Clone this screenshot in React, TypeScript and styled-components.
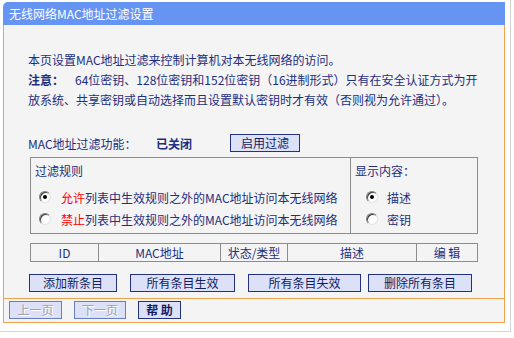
import React from "react";
import styled, { createGlobalStyle } from "styled-components";

const GlobalStyle = createGlobalStyle`
  body {
    margin: 0;
    background: #ffffff;
    font-family: "Noto Sans CJK SC", "DejaVu Sans", sans-serif;
    font-size: 12px;
    color: #1c2f80;
  }
`;

const Page = styled.div`
  width: 502px;
  padding: 2px 5px 8px 3px;
  border-right: 1px solid #d4d4d4;
  border-bottom: 1px solid #d4d4d4;
`;

const TitleBar = styled.div`
  height: 23px;
  line-height: 23px;
  padding-left: 6px;
  background: #6594f2;
  color: #ffffff;
  font-size: 12px;
  border-top-left-radius: 5px;
`;

const Body = styled.div`
  background: #f4f4f4;
  border-left: 1px solid #f0a24c;
  border-right: 1px solid #f0a24c;
  border-bottom: 1px solid #f0a24c;
`;

const Main = styled.div`
  padding: 25px 0 6px 24px;
`;

const Intro = styled.div`
  line-height: 20px;
  .note {
    font-weight: bold;
    margin-right: 11px;
  }
`;

const SwitchRow = styled.div`
  margin-top: 24px;
  height: 18px;
  display: flex;
  align-items: center;
  .label {
    width: 128px;
  }
  .state {
    width: 74px;
    font-weight: bold;
  }
`;

const Button = styled.button<{ $w: number; $bold?: boolean; $off?: boolean }>`
  width: ${(p) => p.$w}px;
  height: 18px;
  padding: 0;
  margin: 0;
  background: #dde1f8;
  border: 1px solid ${(p) => (p.$off ? "#6a7cc4" : "#223180")};
  color: ${(p) => (p.$off ? "#a2a2a8" : "#101c5e")};
  text-shadow: ${(p) => (p.$off ? "1px 1px 0 #ffffff" : "none")};
  font-family: "Noto Sans CJK SC", sans-serif;
  font-size: 12px;
  font-weight: ${(p) => (p.$bold ? "bold" : "normal")};
  line-height: 16px;
  cursor: pointer;
`;

const RulesBox = styled.div`
  margin: 5px 0 0 2px;
  width: 446px;
  display: grid;
  grid-template-columns: 320px 126px;
  border: 1px solid #8c8c8c;
`;

const RuleCell = styled.div<{ $divider?: boolean }>`
  padding: 3px 0 3px 4px;
  border-right: ${(p) => (p.$divider ? "1px solid #8c8c8c" : "none")};
  .title {
    line-height: 20px;
    margin-bottom: 5px;
  }
`;

const RadioRow = styled.label<{ $indent: number; $gap: number }>`
  height: 22px;
  display: flex;
  align-items: center;
  padding-left: ${(p) => p.$indent}px;
  gap: ${(p) => p.$gap}px;
  .hot {
    color: #ff0000;
  }
`;

const Radio = styled.span<{ $on?: boolean }>`
  width: 10px;
  height: 10px;
  border-radius: 50%;
  background: #ffffff;
  border: 1px solid;
  border-color: #7c7c7c #e4e4e4 #e4e4e4 #7c7c7c;
  box-shadow: inset 1px 1px 0 #3c3c3c;
  position: relative;
  &::after {
    content: "";
    display: ${(p) => (p.$on ? "block" : "none")};
    position: absolute;
    left: 3px;
    top: 3px;
    width: 4px;
    height: 4px;
    border-radius: 50%;
    background: #000000;
  }
`;

const HeadTable = styled.div`
  margin: 9px 0 0 2px;
  width: 446px;
  height: 17px;
  display: grid;
  grid-template-columns: 68px 122px 67px 129px 60px;
  border: 1px solid #8c8c8c;
`;

const HeadCell = styled.div`
  text-align: center;
  line-height: 17px;
  border-right: 1px solid #8c8c8c;
  &:last-child {
    border-right: none;
  }
`;

const ActionRow = styled.div`
  margin: 12px 0 0 1px;
  display: flex;
  gap: 13px;
  .tight {
    margin-left: -6px;
  }
`;

const NavRow = styled.div`
  border-top: 1px solid #f0a24c;
  height: 24px;
  padding: 2px 0 0 5px;
  box-sizing: border-box;
  display: flex;
  gap: 12px;
`;

const App = () => {
  return (
    <Page>
      <GlobalStyle />
      <TitleBar>无线网络MAC地址过滤设置</TitleBar>
      <Body>
        <Main>
          <Intro>
            本页设置MAC地址过滤来控制计算机对本无线网络的访问。
            <br />
            <span className="note">注意：</span>
            64位密钥、128位密钥和152位密钥（16进制形式）只有在安全认证方式为开
            <br />
            放系统、共享密钥或自动选择而且设置默认密钥时才有效（否则视为允许通过）。
          </Intro>
          <SwitchRow>
            <span className="label">MAC地址过滤功能：</span>
            <span className="state">已关闭</span>
            <Button $w={70}>启用过滤</Button>
          </SwitchRow>
          <RulesBox>
            <RuleCell $divider>
              <div className="title">过滤规则</div>
              <RadioRow $indent={4} $gap={10}>
                <Radio $on />
                <span>
                  <span className="hot">允许</span>列表中生效规则之外的MAC地址访问本无线网络
                </span>
              </RadioRow>
              <RadioRow $indent={4} $gap={10}>
                <Radio />
                <span>
                  <span className="hot">禁止</span>列表中生效规则之外的MAC地址访问本无线网络
                </span>
              </RadioRow>
            </RuleCell>
            <RuleCell>
              <div className="title">显示内容：</div>
              <RadioRow $indent={11} $gap={9}>
                <Radio $on />
                <span>描述</span>
              </RadioRow>
              <RadioRow $indent={11} $gap={9}>
                <Radio />
                <span>密钥</span>
              </RadioRow>
            </RuleCell>
          </RulesBox>
          <HeadTable>
            <HeadCell>ID</HeadCell>
            <HeadCell>MAC地址</HeadCell>
            <HeadCell>状态/类型</HeadCell>
            <HeadCell>描述</HeadCell>
            <HeadCell>编 辑</HeadCell>
          </HeadTable>
          <ActionRow>
            <Button $w={88}>添加新条目</Button>
            <Button $w={105}>所有条目生效</Button>
            <Button $w={113}>所有条目失效</Button>
            <Button $w={104} className="tight">
              删除所有条目
            </Button>
          </ActionRow>
        </Main>
        <NavRow>
          <Button $w={53} $off disabled>
            上一页
          </Button>
          <Button $w={52} $off disabled>
            下一页
          </Button>
          <Button $w={43} $bold>
            帮 助
          </Button>
        </NavRow>
      </Body>
    </Page>
  );
};

export default App;
